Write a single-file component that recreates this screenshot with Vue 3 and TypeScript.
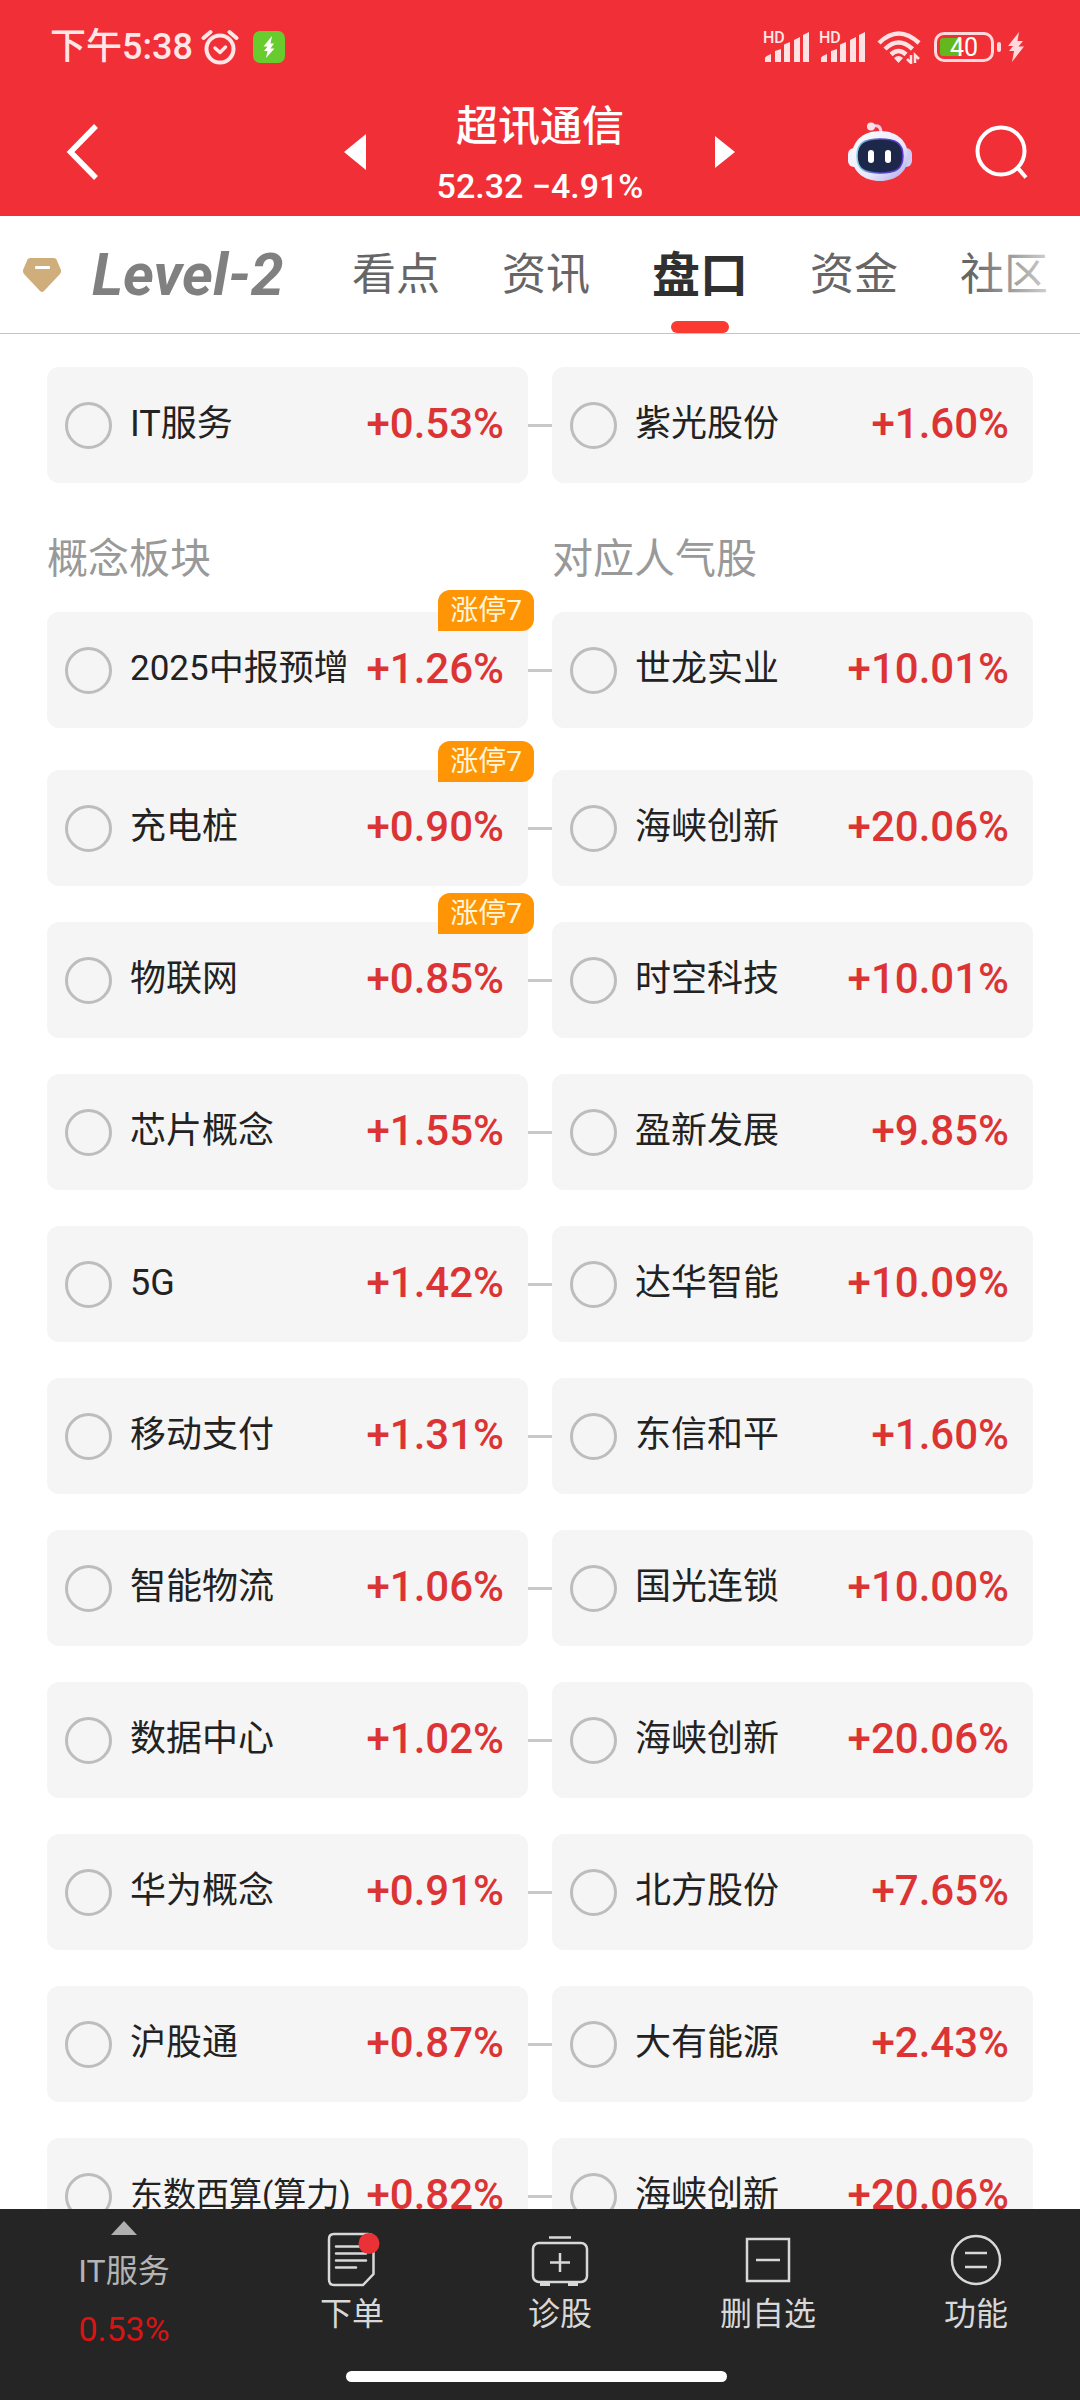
<script setup lang="ts">
import { ref } from 'vue'

interface Pair {
  board: string
  boardChange: string
  stock: string
  stockChange: string
  badge?: string
  fit?: 'snug' | 'tight'
}

const industry: Pair[] = [
  { board: 'IT服务', boardChange: '+0.53%', stock: '紫光股份', stockChange: '+1.60%' },
]

const concepts: Pair[] = [
  { board: '2025中报预增', boardChange: '+1.26%', stock: '世龙实业', stockChange: '+10.01%', badge: '涨停7', fit: 'snug' },
  { board: '充电桩', boardChange: '+0.90%', stock: '海峡创新', stockChange: '+20.06%', badge: '涨停7' },
  { board: '物联网', boardChange: '+0.85%', stock: '时空科技', stockChange: '+10.01%', badge: '涨停7' },
  { board: '芯片概念', boardChange: '+1.55%', stock: '盈新发展', stockChange: '+9.85%' },
  { board: '5G', boardChange: '+1.42%', stock: '达华智能', stockChange: '+10.09%' },
  { board: '移动支付', boardChange: '+1.31%', stock: '东信和平', stockChange: '+1.60%' },
  { board: '智能物流', boardChange: '+1.06%', stock: '国光连锁', stockChange: '+10.00%' },
  { board: '数据中心', boardChange: '+1.02%', stock: '海峡创新', stockChange: '+20.06%' },
  { board: '华为概念', boardChange: '+0.91%', stock: '北方股份', stockChange: '+7.65%' },
  { board: '沪股通', boardChange: '+0.87%', stock: '大有能源', stockChange: '+2.43%' },
  { board: '东数西算(算力)', boardChange: '+0.82%', stock: '海峡创新', stockChange: '+20.06%', fit: 'tight' },
]

const sections = [
  { id: 'industry', titles: [] as string[], rows: industry },
  { id: 'concept', titles: ['概念板块', '对应人气股'], rows: concepts },
]

const tabs = ['看点', '资讯', '盘口', '资金', '社区']
const activeTab = ref('盘口')
</script>

<template>
  <div class="app">
    <header class="header">
      <div class="status">
        <span class="time">下午5:38</span>
        <svg class="alarm" width="38" height="36" viewBox="0 0 38 36" fill="none" stroke="#ffe6e7" stroke-linecap="round" stroke-linejoin="round">
          <circle cx="19" cy="20" r="13.500" stroke-width="4" />
          <path d="M2.500 9 L9.500 3 M35.500 9 L28.500 3" stroke-width="4" />
          <path d="M14 19 L19 23.500 L24.500 18" stroke-width="3.500" />
        </svg>
        <svg class="charge" width="32" height="32" viewBox="0 0 32 32">
          <rect width="32" height="32" rx="7" fill="#68cb2e" />
          <path d="M19 5 L10.500 15.500 H14.500 L11 20 H14.500 L13 27 L21.500 17.500 H17.500 L21 12.500 H17.500 Z" fill="#fff" />
        </svg>
        <span class="spacer"></span>
        <span v-for="n in 2" :key="n" class="signal">
          <span class="hd">HD</span>
          <svg width="46" height="32" viewBox="0 0 46 32" fill="#ffe3e4">
            <path d="M2 31 V27 Q2 25.500 8 23 V31 Z M12 31 V20 L18 18 V31 Z M21 31 V13.500 L27 11 V31 Z M31 31 V9 L37 6 V31 Z M40 31 V4 L46 1 V31 Z" />
          </svg>
        </span>
        <svg class="wifi" width="44" height="34" viewBox="0 0 44 34" fill="none" stroke="#ffe3e4" stroke-width="4.500">
          <path d="M2 13 Q21.500 -6 42 13" />
          <path d="M8 19 Q21.500 6 35.500 19" />
          <path d="M14 24.500 Q21.500 17.500 29 24.500" />
          <path d="M17 28 Q21.500 24 26 28 L21.500 33 Z" fill="#ffe3e4" stroke="none" />
          <path d="M34 25 V33 L30 29 M38 33 V25 L42 29" stroke-width="2.500" />
        </svg>
        <span class="battery"><span class="level"></span><span class="charge-text">40</span></span>
        <svg class="nub" width="4" height="10" viewBox="0 0 4 10"><rect width="4" height="10" rx="2" fill="#ffd9db" /></svg>
        <svg class="bolt" width="16" height="30" viewBox="0 0 16 30">
          <path d="M11 0 L0 14 H5 L1 19 H6 L4 30 L16 14.500 H10.500 L15 9 H9.500 Z" fill="#ffd9db" />
        </svg>
      </div>

      <div class="titlebar">
        <button class="icon-btn back" aria-label="返回">
          <svg width="34" height="58" viewBox="0 0 34 58" fill="none" stroke="#fff" stroke-width="5.500"><path d="M31 3 L5.500 29 L31 55" /></svg>
        </button>
        <div class="stock">
          <button class="icon-btn" aria-label="上一只">
            <svg width="22" height="36" viewBox="0 0 22 36"><path d="M22 0 V36 L0 18 Z" fill="#fff" /></svg>
          </button>
          <div class="stock-text">
            <h1>超讯通信</h1>
            <p>52.32 −4.91%</p>
          </div>
          <button class="icon-btn" aria-label="下一只">
            <svg width="22" height="32" viewBox="0 0 22 32"><path d="M1 0 V32 L21 16 Z" fill="#fff" /></svg>
          </button>
        </div>
        <div class="actions">
          <button class="icon-btn" aria-label="智能助手">
            <svg width="64" height="62" viewBox="0 0 64 62">
              <defs>
                <linearGradient id="shell" x1="0" y1="0" x2="1" y2="1">
                  <stop offset="0" stop-color="#ffffff" />
                  <stop offset="0.600" stop-color="#e9e6fb" />
                  <stop offset="1" stop-color="#a8a4ea" />
                </linearGradient>
                <linearGradient id="rim" x1="0" y1="0" x2="1" y2="0">
                  <stop offset="0" stop-color="#7fd3ea" />
                  <stop offset="0.500" stop-color="#5145b8" />
                  <stop offset="1" stop-color="#5f3bd6" />
                </linearGradient>
              </defs>
              <path d="M25 5 Q33 3 33 12" fill="none" stroke="#f4cbe0" stroke-width="3" />
              <circle cx="23" cy="5.500" r="4" fill="#fbdfe9" />
              <rect x="0" y="27" width="12" height="19" rx="6" fill="#f3f1fd" />
              <rect x="52" y="27" width="12" height="19" rx="6" fill="#cfcaf4" />
              <path d="M32 10 C50 10 60 21 60 35 C60 51 48 60 32 60 C16 60 4 51 4 35 C4 21 14 10 32 10 Z" fill="url(#shell)" />
              <path d="M32 18 C48 18 55 22 55 35 C55 48 48 52 32 52 C16 52 9 48 9 35 C9 22 16 18 32 18 Z" fill="#1d2749" stroke="url(#rim)" stroke-width="1.500" />
              <rect x="20" y="29" width="6" height="13" rx="3" fill="#fff" />
              <rect x="37" y="29" width="6" height="13" rx="3" fill="#fff" />
            </svg>
          </button>
          <button class="icon-btn" aria-label="搜索">
            <svg width="54" height="54" viewBox="0 0 54 54" fill="none" stroke="#fff" stroke-width="4">
              <circle cx="27" cy="26" r="23.500" />
              <path d="M43 42 L52 52.500" />
            </svg>
          </button>
        </div>
      </div>
    </header>

    <nav class="tabs">
      <svg class="gem" width="40" height="36" viewBox="0 0 40 36">
        <path d="M8 1 H32 Q33.500 1 34.500 2.500 L39 13 Q39.500 15 38 17 L22 34 Q20 36 18 34 L2 17 Q0.500 15 1 13 L5.500 2.500 Q6.500 1 8 1 Z" fill="#cfae7b" />
        <rect x="13" y="9" width="15" height="3" rx="1" fill="#fff" />
      </svg>
      <a class="level2" href="#level2">Level-2</a>
      <a
        v-for="tab in tabs"
        :key="tab"
        class="tab"
        :class="{ active: tab === activeTab }"
        :href="'#' + tab"
        @click.prevent="activeTab = tab"
      >{{ tab }}</a>
    </nav>

    <main class="content">
      <section v-for="section in sections" :key="section.id" :class="section.id">
        <div v-if="section.titles.length" class="titles">
          <h2 v-for="title in section.titles" :key="title">{{ title }}</h2>
        </div>
        <div v-for="row in section.rows" :key="row.board" class="row">
          <label class="card">
            <input type="checkbox" />
            <span class="name" :class="row.fit">{{ row.board }}</span>
            <span class="change">{{ row.boardChange }}</span>
          </label>
          <span class="link"></span>
          <label class="card">
            <input type="checkbox" />
            <span class="name">{{ row.stock }}</span>
            <span class="change">{{ row.stockChange }}</span>
          </label>
          <span v-if="row.badge" class="badge-lane"><span class="badge">{{ row.badge }}</span></span>
        </div>
      </section>
    </main>

    <footer class="footer">
      <div class="toolbar">
        <button class="sector">
          <svg width="26" height="14" viewBox="0 0 26 14"><path d="M13 0 L26 14 H0 Z" fill="#b0b0b0" /></svg>
          <span class="sector-name">IT服务</span>
          <span class="sector-change">0.53%</span>
        </button>
        <button class="tool">
          <svg width="60" height="60" viewBox="0 0 60 60" fill="none" stroke="#d8d8d8" stroke-width="2.500" stroke-linecap="round">
            <path d="M12 4 H46 Q51.500 4 51.500 9 V44 L41 55 H12 Q7 55 7 49.500 V9 Q7 4 12 4 Z" />
            <path d="M14 16.500 H40 M14 23.500 H44 M14 30.500 H44 M14 37.500 H34" />
            <circle cx="47" cy="13.500" r="10.500" fill="#ea3136" stroke="none" />
          </svg>
          <span>下单</span>
        </button>
        <button class="tool">
          <svg width="60" height="60" viewBox="0 0 60 60" fill="none" stroke="#d8d8d8" stroke-width="2.500">
            <rect x="3" y="13" width="54" height="39" rx="6" />
            <path d="M19 7.500 H41 M30 23 V42 M20 32.500 H40" />
            <path d="M10 54 H20 M38 54 H48" stroke-width="4" />
          </svg>
          <span>诊股</span>
        </button>
        <button class="tool">
          <svg width="60" height="60" viewBox="0 0 60 60" fill="none" stroke="#d8d8d8" stroke-width="2.500">
            <rect x="9" y="9" width="42" height="42" />
            <path d="M18 30 H42" />
          </svg>
          <span>删自选</span>
        </button>
        <button class="tool">
          <svg width="60" height="60" viewBox="0 0 60 60" fill="none" stroke="#d8d8d8" stroke-width="2.500">
            <circle cx="30" cy="30" r="24" />
            <path d="M19 23 H41 M19 37 H41" />
          </svg>
          <span>功能</span>
        </button>
      </div>
      <div class="home-bar"></div>
    </footer>
  </div>
</template>

<style>
body {
  background: #fff;
}
</style>

<style scoped>
.app {
  display: flex;
  flex-direction: column;
  height: 100vh;
  overflow: hidden;
  background: #fff;
  color: #222;
  font-family: Roboto, "Noto Sans CJK SC", sans-serif;
}

button {
  border: 0;
  padding: 0;
  background: none;
  color: inherit;
  font: inherit;
  cursor: pointer;
}

a {
  color: inherit;
  text-decoration: none;
}

h1,
h2,
p {
  margin: 0;
  font-weight: 400;
}

svg {
  display: block;
  flex: none;
}

/* Header */
.header {
  flex: none;
  background: #f12f37;
  color: #fff;
}

.status {
  display: flex;
  align-items: center;
  height: 94px;
  padding: 0 56px 0 50px;
  color: #ffe6e7;
}

.time {
  font-size: 36px;
  font-weight: 500;
  line-height: 40px;
}

.alarm {
  margin-left: 8px;
}

.charge {
  margin-left: 14px;
}

.spacer {
  flex: 1;
}

.signal {
  position: relative;
  margin-right: 10px;
}

.hd {
  position: absolute;
  top: 0;
  left: 0;
  font-size: 16px;
  font-weight: 500;
  line-height: 14px;
}

.wifi {
  margin-left: 2px;
}

.battery {
  position: relative;
  box-sizing: border-box;
  width: 60px;
  height: 30px;
  margin-left: 13px;
  border: 3px solid #ffd9db;
  border-radius: 10px;
  padding: 3px;
}

.level {
  display: block;
  width: 45%;
  height: 100%;
  border-radius: 3px 0 0 3px;
  background: #62b81c;
}

.charge-text {
  position: absolute;
  inset: 0;
  color: #fff;
  font-size: 25px;
  line-height: 25px;
  text-align: center;
}

.nub {
  margin-left: 3px;
}

.bolt {
  margin-left: 7px;
}

.titlebar {
  display: grid;
  grid-template-columns: 1fr 392px 1fr;
  align-items: center;
  height: 116px;
  padding-bottom: 6px;
}

.icon-btn {
  display: block;
}

.back {
  margin-left: 65px;
  justify-self: start;
}

.stock {
  display: flex;
  align-items: center;
  justify-content: space-between;
}

.stock-text {
  padding-top: 6px;
  text-align: center;
}

.stock-text h1 {
  font-size: 42px;
  font-weight: 500;
  line-height: 46px;
}

.stock-text p {
  margin-top: 16px;
  font-size: 34px;
  font-weight: 500;
  line-height: 40px;
}

.actions {
  display: flex;
  align-items: center;
  justify-content: flex-end;
  gap: 62px;
  padding-right: 52px;
}

/* Tabs */
.tabs {
  position: relative;
  display: flex;
  flex: none;
  align-items: center;
  height: 117px;
  overflow: hidden;
  border-bottom: 1px solid #c4c4c4;
  color: #666;
  white-space: nowrap;
}

.tabs::after {
  content: "";
  position: absolute;
  top: 0;
  right: 30px;
  width: 80px;
  height: 100%;
  background: linear-gradient(to right, rgba(255, 255, 255, 0), rgba(255, 255, 255, 0.7));
  pointer-events: none;
}

.gem {
  margin-left: 22px;
}

.level2 {
  flex: none;
  width: 198px;
  margin: 0 62px 0 30px;
  color: #808080;
  font-size: 59px;
  font-style: italic;
  font-weight: 700;
}

.tab {
  position: relative;
  flex: none;
  margin-right: 62px;
  padding-top: 2px;
  font-size: 44px;
  line-height: 115px;
}

.tab.active {
  color: #303030;
  font-size: 48px;
  font-weight: 700;
}

.tab.active::after {
  content: "";
  position: absolute;
  bottom: 0;
  left: 50%;
  width: 58px;
  height: 12px;
  margin-left: -29px;
  border-radius: 6px;
  background: #fb3b31;
}

/* List */
.content {
  flex: 1;
  min-height: 0;
  overflow-y: auto;
  padding: 0 47px;
  scrollbar-width: none;
}

.row {
  position: relative;
  display: flex;
  align-items: center;
  padding-top: 36px;
}

.industry .row {
  padding-top: 33px;
}

.titles {
  display: grid;
  grid-template-columns: 1fr 1fr;
  column-gap: 24px;
  padding-top: 52px;
}

.titles h2 {
  color: #999;
  font-size: 41px;
  line-height: 48px;
}

.titles + .row {
  padding: 29px 0 6px;
}

.card {
  display: flex;
  flex: 1;
  align-items: center;
  box-sizing: border-box;
  height: 116px;
  padding: 0 24px 0 18px;
  border-radius: 12px;
  background: #f5f5f5;
}

.card input {
  flex: none;
  width: 47px;
  height: 47px;
  margin: 0 18px 0 0;
  border: 3px solid #bdbdbd;
  border-radius: 50%;
  appearance: none;
}

.card input:checked {
  background: #e03636;
}

.name {
  flex: 1;
  padding-bottom: 2px;
  font-size: 36px;
  line-height: 44px;
  white-space: nowrap;
}

.name.snug {
  font-size: 35px;
}

.name.tight {
  font-size: 33px;
}

.change {
  padding-bottom: 2px;
  color: #dc3434;
  font-size: 42px;
  font-weight: 500;
  line-height: 44px;
}

.link {
  width: 24px;
  height: 3px;
  background: #c8c8c8;
}

.badge-lane {
  position: absolute;
  top: 7px;
  left: 0;
  display: flex;
  justify-content: flex-end;
  width: calc(50% - 6px);
}

.badge {
  padding: 0 12px;
  border-radius: 12px 12px 12px 0;
  background: #ff9505;
  color: #fff6dc;
  font-size: 28px;
  line-height: 41px;
}

/* Footer */
.footer {
  flex: none;
  background: #252525;
  color: #d8d8d8;
}

.toolbar {
  display: flex;
  height: 162px;
}

.sector {
  display: flex;
  flex: none;
  flex-direction: column;
  align-items: center;
  width: 248px;
  padding-top: 12px;
}

.sector-name {
  margin-top: 16px;
  color: #b4b4b4;
  font-size: 32px;
  line-height: 40px;
}

.sector-change {
  margin-top: 18px;
  color: #d81414;
  font-size: 34px;
  line-height: 40px;
}

.tool {
  display: flex;
  flex: 1;
  flex-direction: column;
  align-items: center;
  padding-top: 21px;
  font-size: 32px;
  line-height: 40px;
}

.tool span {
  margin-top: 4px;
}

.home-bar {
  width: 381px;
  height: 11px;
  margin: 0 0 18px calc(50% - 194px);
  border-radius: 6px;
  background: #fff;
}
</style>
